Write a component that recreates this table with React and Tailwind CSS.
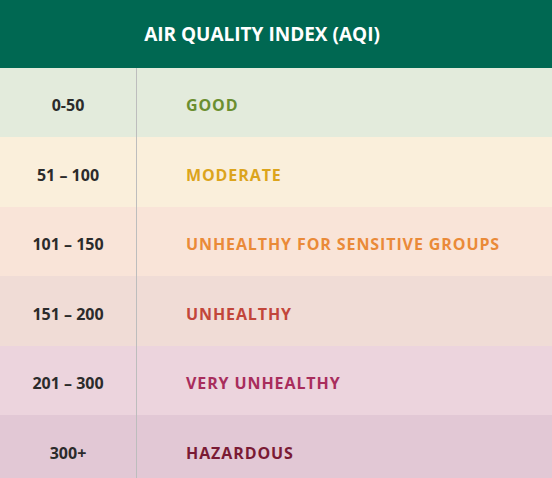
import React from "react";

const rows = [
  { range: "0-50", label: "GOOD", bg: "bg-[#e3ebdc]", color: "text-[#6b8f2f]", h: "h-[69px]" },
  { range: "51 – 100", label: "MODERATE", bg: "bg-[#faefdb]", color: "text-[#dca41c]", h: "h-[70px]" },
  { range: "101 – 150", label: "UNHEALTHY FOR SENSITIVE GROUPS", bg: "bg-[#f9e4d8]", color: "text-[#ea8a38]", h: "h-[69px]" },
  { range: "151 – 200", label: "UNHEALTHY", bg: "bg-[#f0dcd6]", color: "text-[#c2463a]", h: "h-[70px]" },
  { range: "201 – 300", label: "VERY UNHEALTHY", bg: "bg-[#ecd4dd]", color: "text-[#a82d5c]", h: "h-[69px]" },
  { range: "300+", label: "HAZARDOUS", bg: "bg-[#e2c8d5]", color: "text-[#7a1a34]", h: "h-[70px]" },
];

export default function App() {
  return (
    <div className="w-[552px] h-[478px] overflow-hidden font-['Open_Sans',sans-serif] font-bold">
      <div className="h-[68px] bg-[#006852] flex items-center justify-center pr-[28px]">
        <span className="text-white text-[19px]">AIR QUALITY INDEX (AQI)</span>
      </div>
      {rows.map((r) => (
        <div key={r.label} className={`flex ${r.h} ${r.bg}`}>
          <div className="w-[137px] flex items-center justify-center pt-[5px] text-[16px] text-[#2b2b2b] border-r border-[#bdbdbd]">
            {r.range}
          </div>
          <div className={`flex-1 flex items-center pl-[49px] pt-[5px] text-[16px] tracking-[0.9px] ${r.color}`}>
            {r.label}
          </div>
        </div>
      ))}
    </div>
  );
}
